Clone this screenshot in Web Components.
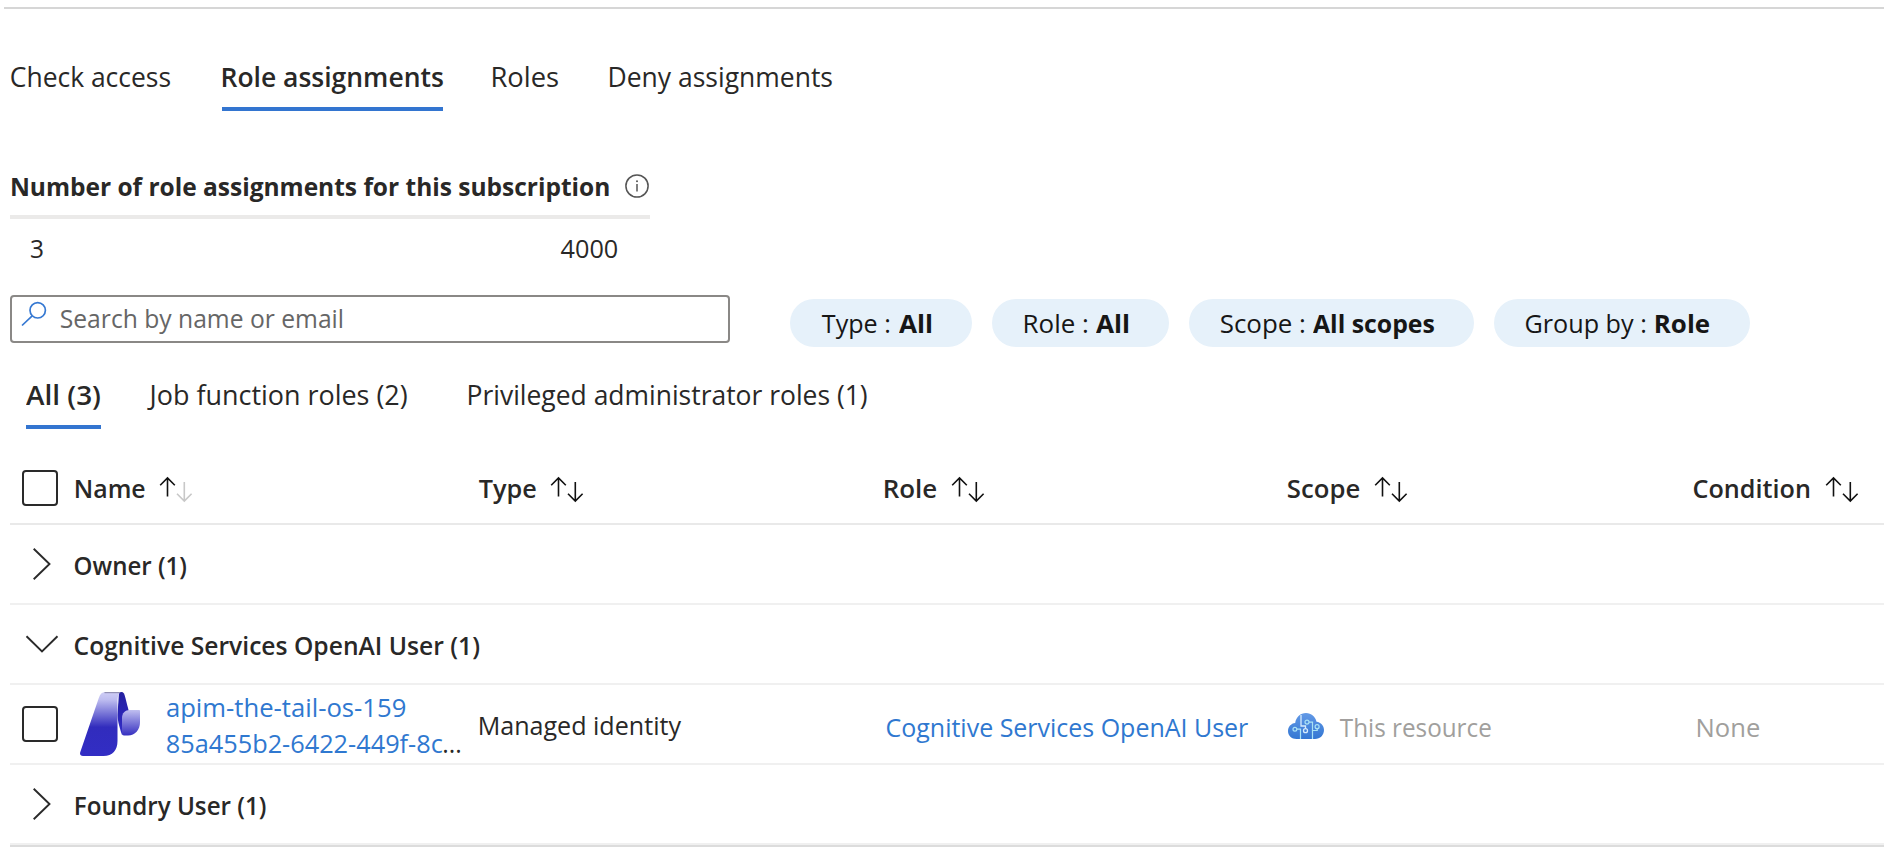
<!DOCTYPE html>
<html lang="en">
<head>
<meta charset="utf-8">
<title>Access control</title>
<style>
html,body{margin:0;background:#fff}
body{width:1884px;height:848px;overflow:hidden;font-family:"Open Sans","Noto Sans",sans-serif;color:#292827}
</style>
</head>
<body>
<access-page></access-page>
<script>
const define = (name, html, setup) => {
  const t = document.createElement('template');
  t.innerHTML = html;
  customElements.define(name, class extends HTMLElement {
    connectedCallback() {
      if (this.shadowRoot) return;
      this.attachShadow({mode: 'open'}).append(t.content.cloneNode(true));
      if (setup) setup(this, this.shadowRoot);
    }
  });
};

// Label with a fixed measure: the glyph run is condensed to the width in "w".
// Bounds are taken at 10x size, since they are rounded to whole pixels.
const ctx = document.createElement('canvas').getContext('2d');
define('fit-label', `<style>
:host{display:block;height:36px;line-height:36px;white-space:pre;font-size:25.5px;flex:none}
:host([size=l]){font-size:27.4px}
:host([weight="600"]){font-weight:600}
:host([weight="700"]){font-weight:700}
span{display:inline-block;transform-origin:0 50%}
</style><span><slot></slot></span>`, (el, root) => {
  const w = +el.getAttribute('w');
  const cs = getComputedStyle(el);
  ctx.font = `${cs.fontWeight} ${parseFloat(cs.fontSize) * 10}px "Open Sans","Noto Sans",sans-serif`;
  const m = ctx.measureText(el.textContent);
  const left = m.actualBoundingBoxLeft / 10, right = m.actualBoundingBoxRight / 10;
  const s = w / (left + right);
  el.style.width = w + 'px';
  root.querySelector('span').style.transform = `translateX(${left * s}px) scaleX(${s})`;
});

define('nav-tab', `<style>
:host{display:block;box-sizing:border-box;flex:none}
:host([active]){border-bottom:4px solid #3375d0}
:host([major]){height:52px}
:host([minor]){height:52px}
</style><slot></slot>`);

define('info-icon', `<style>:host{display:block;width:24px;height:24px;margin-top:6px}svg{display:block}</style>
<svg width="24" height="24" viewBox="0 0 24 24" fill="none" stroke="#555" stroke-width="1.5"><circle cx="12" cy="12" r="11.1"/><path d="M12 10v7.5"/><circle cx="12" cy="7.2" r="1" fill="#555" stroke="none"/></svg>`);

define('search-box', `<style>
:host{display:flex;box-sizing:border-box;width:720px;height:48px;border:2px solid #8a8886;border-radius:4px;padding:3px 0 0 9px;color:#666}
svg{flex:none;margin-right:14px;margin-top:1px}
</style><svg width="26" height="28" viewBox="0 0 26 28" fill="none" stroke="#3578d2" stroke-width="1.7"><circle cx="16.700" cy="9.300" r="7.700"/><path d="M11.200 14.800 1 24.500"/></svg><slot></slot>`);

define('filter-pill', `<style>
:host{display:flex;box-sizing:border-box;height:48px;border-radius:24px;background:#e6f1fa;padding:6px 0 0 32px;color:#161616;flex:none}
</style><slot></slot>`);

define('check-box', `<style>
:host{display:block;box-sizing:border-box;width:36px;height:36px;border:2px solid #2a2a2a;border-radius:4px;flex:none}
</style>`);

define('sort-arrows', `<style>:host{display:block;margin:6px 0 0 14px}svg{display:block}:host([dim]) .d{stroke:#c8c8c8}</style>
<svg width="36" height="28" viewBox="0 0 36 28" fill="none" stroke="#111" stroke-width="1.6"><path d="M9.500 20.500V2M2.200 9.200 9.500 1.900 16.800 9.200"/><path class="d" d="M26.300 6v18.700M19 17.800l7.300 7.300 7.300-7.300"/></svg>`);

define('head-cell', `<style>:host{display:flex;flex:none}</style><slot></slot>`);

define('grid-row', `<style>
:host{display:grid;grid-template-columns:53px 404px 406px 403px 406px 1fr;box-sizing:border-box;margin-left:10px;height:80px;border-bottom:2px solid #f0f0f0;padding:22px 0 0 12px;align-items:start}
:host([head]){height:96px;padding-top:41px;border-bottom-color:#e9e9e9}
</style><slot></slot>`);

define('row-chevron', `<style>
:host{display:block;width:36px;height:36px}svg{display:block}
:host([open]) .r,:host(:not([open])) .d{display:none}
</style><svg width="40" height="36" viewBox="0 0 40 36" fill="none" stroke="#2a2a2a" stroke-width="1.900"><path class="r" d="M11.700 1.700 27.500 17 11.700 32.300"/><path class="d" d="M4.500 9.200 20 24.500 35.500 9.200"/></svg>`);

define('identity-cell', `<style>
:host{display:flex;margin-top:-18px;color:#2f78d0}
svg{flex:none;display:block;margin:3px 0 0 5px}
.t{margin-left:26.500px}
</style>
<svg width="60" height="64" viewBox="0 0 60 64">
<defs>
<linearGradient id="a" x1="0" y1="0" x2="0" y2="1"><stop offset="0" stop-color="#cfcef6"/><stop offset=".12" stop-color="#bebdf0"/><stop offset=".55" stop-color="#312cbd"/><stop offset="1" stop-color="#322dc4"/></linearGradient>
<linearGradient id="b" x1="0" y1="0" x2="0" y2="1"><stop offset="0" stop-color="#2520a0"/><stop offset=".5" stop-color="#2a24b4"/><stop offset="1" stop-color="#3530c8"/></linearGradient>
<linearGradient id="c" x1="0" y1="0" x2="0" y2="1"><stop offset="0" stop-color="#c0bff0"/><stop offset="1" stop-color="#352fc0"/></linearGradient>
</defs>
<path fill="url(#b)" d="M39 0h2.500c2 0 2.800 2 3.400 4L48.500 18 50 30l-8 13c-2-6-4.500-14-4.500-20z"/>
<path fill="url(#a)" d="M25 0h16c-3 1-3.500 6-3.500 10v39c0 9-5 15-14 15H3c-2.500 0-3.500-1.500-2.700-4L18.800 6C20 2 22 0 25 0z"/>
<path d="M24.500.6H40" stroke="#9290b4" stroke-width="1.200"/>
<path fill="url(#c)" d="M50 18h9c.7 0 1 .4 1 1v11c0 8-5 13.500-12 13.500h-4c-1.300 0-2-.7-2-2V26c0-5 3-8 8-8z"/>
</svg><div class="t"><slot></slot></div>`);

define('cloud-scope', `<style>:host{display:flex;margin-top:2px;color:#a19f9d}svg{flex:none;display:block;margin:4px 16px 0 0}</style>
<svg width="36" height="26" viewBox="0 0 36 26"><defs><linearGradient id="g" x1="0" y1="0" x2="0" y2="1"><stop offset="0" stop-color="#6299e6"/><stop offset="1" stop-color="#3477d3"/></linearGradient></defs>
<path fill="url(#g)" d="M8.500 26C3.500 26 0 22.500 0 18c0-4.200 3-7.500 7.200-8C8 4 12.500 0 18 0c5.300 0 9.400 3.500 10.500 8.700C33 9.300 36 12.800 36 17c0 5-3.800 9-9 9z"/>
<g fill="none" stroke="#a9e2f5" stroke-width="1.200"><circle cx="6.900" cy="16.200" r="1.900"/><path d="M8.800 16.200h3.700V26"/><circle cx="19" cy="9.100" r="2"/><path d="M21 9.100h3.500V26M24.500 17.500h4.700v-1.800"/><circle cx="29.100" cy="13.700" r="2"/></g>
<g fill="none" stroke="#d6ebfc" stroke-width="1.300"><path d="M13 2v11h4.500v2.500"/><circle cx="17.500" cy="17.700" r="2"/></g></svg><slot></slot>`);

define('access-page', `<style>
:host{display:block}
.rule{height:2px;margin:0 0 0 4px;background:#d6d6d6}
.top{padding-top:7px}
.tabs,.sub,.title,.counts,.tools{display:flex}
.tabs{margin:50px 0 0 11px}
.usage{width:640px;margin:57px 0 0 10px}
.title{box-sizing:border-box;height:51px;border-bottom:4px solid #ebeae9;padding-left:1.500px}
.title info-icon{margin-left:17px}
.counts{padding:11px 33px 0 21px;justify-content:space-between}
.tools{margin:29px 0 0 10px;height:52px;align-items:flex-start}
.pills{display:flex;gap:20px;margin:4px 0 0 60px}
.sub{margin:30px 0 0 26px}
.l{display:flex}
.link{color:#2f78d0}
.ell{color:#292827}
.end{height:2px;background:#dcdcdc;margin-left:10px}
</style>
<div class="top"><div class="rule"></div></div>
<div class="tabs">
<nav-tab major><fit-label size="l" w="159">Check access</fit-label></nav-tab>
<nav-tab major active style="margin-left:52px"><fit-label size="l" weight="600" w="220" style="margin:0 .5px">Role assignments</fit-label></nav-tab>
<nav-tab major style="margin-left:50px"><fit-label size="l" w="65">Roles</fit-label></nav-tab>
<nav-tab major style="margin-left:52px"><fit-label size="l" w="222">Deny assignments</fit-label></nav-tab>
</div>
<div class="usage">
<div class="title"><fit-label weight="700" w="596.5">Number of role assignments for this subscription</fit-label><info-icon></info-icon></div>
<div class="counts"><fit-label w="11.500">3</fit-label><fit-label w="56">4000</fit-label></div>
</div>
<div class="tools">
<search-box><fit-label w="281">Search by name or email</fit-label></search-box>
<div class="pills">
<filter-pill style="width:182px"><fit-label w="67">Type :</fit-label><fit-label weight="700" w="32" style="margin-left:10px">All</fit-label></filter-pill>
<filter-pill style="width:177px"><fit-label w="62" style="margin-left:1px">Role :</fit-label><fit-label weight="700" w="32" style="margin-left:9px">All</fit-label></filter-pill>
<filter-pill style="width:285px"><fit-label w="83">Scope :</fit-label><fit-label weight="700" w="121" style="margin-left:9px">All scopes</fit-label></filter-pill>
<filter-pill style="width:256px"><fit-label w="119">Group by :</fit-label><fit-label weight="700" w="53" style="margin-left:11px">Role</fit-label></filter-pill>
</div>
</div>
<div class="sub">
<nav-tab minor active><fit-label size="l" weight="600" w="74" style="margin-right:1px">All (3)</fit-label></nav-tab>
<nav-tab minor style="margin-left:46px"><fit-label size="l" w="260">Job function roles (2)</fit-label></nav-tab>
<nav-tab minor style="margin-left:62px"><fit-label size="l" w="398">Privileged administrator roles (1)</fit-label></nav-tab>
</div>
<grid-row head>
<check-box></check-box>
<head-cell><fit-label weight="600" w="68.500" style="margin-left:.5px">Name</fit-label><sort-arrows></sort-arrows></head-cell>
<head-cell><fit-label weight="600" w="56.500" style="margin-left:-.5px">Type</fit-label><sort-arrows></sort-arrows></head-cell>
<head-cell><fit-label weight="600" w="51">Role</fit-label><sort-arrows></sort-arrows></head-cell>
<head-cell><fit-label weight="600" w="71">Scope</fit-label><sort-arrows></sort-arrows></head-cell>
<head-cell><fit-label weight="600" w="115">Condition</fit-label><sort-arrows style="margin-left:15px"></sort-arrows></head-cell>
</grid-row>
<grid-row><row-chevron></row-chevron><fit-label weight="600" w="111">Owner (1)</fit-label></grid-row>
<grid-row><row-chevron open></row-chevron><fit-label weight="600" w="404">Cognitive Services OpenAI User (1)</fit-label></grid-row>
<grid-row>
<check-box style="margin-top:-1px"></check-box>
<identity-cell><fit-label w="238">apim-the-tail-os-159</fit-label><div class="l"><fit-label w="275">85a455b2-6422-449f-8c</fit-label><fit-label class="ell" w="16" style="margin-left:2px">...</fit-label></div></identity-cell>
<fit-label w="201" style="margin-left:.5px">Managed identity</fit-label>
<fit-label class="link" w="361" style="margin:2px 0 0 1.500px">Cognitive Services OpenAI User</fit-label>
<cloud-scope><fit-label w="150.500">This resource</fit-label></cloud-scope>
<fit-label w="61" style="margin:2px 0 0 3.500px;color:#a19f9d">None</fit-label>
</grid-row>
<grid-row><row-chevron></row-chevron><fit-label weight="600" w="189.500" style="margin-left:.5px">Foundry User (1)</fit-label></grid-row>
<div class="end"></div>`, (el, root) => {
  root.querySelector('sort-arrows').setAttribute('dim', '');
});
</script>
</body>
</html>
